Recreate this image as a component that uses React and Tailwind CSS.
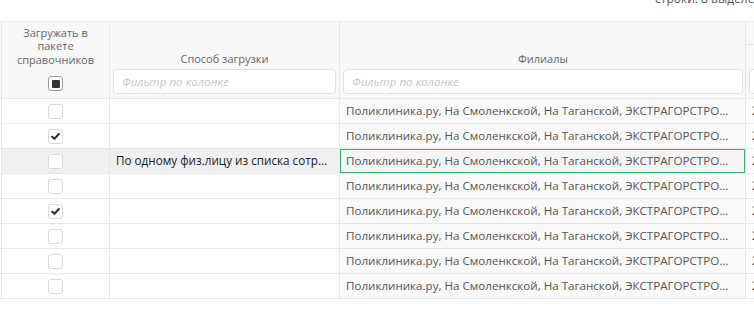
import React from "react";

const FILIAL = "Поликлиника.ру, На Смоленкской, На Таганской, ЭКСТРАГОРСТРО...";

const rows = [
  { checked: false },
  { checked: true },
  { checked: false, method: "По одному физ.лицу из списка сотр...", selected: true },
  { checked: false },
  { checked: true },
  { checked: false },
  { checked: false },
  { checked: false },
];

function Check({ checked }) {
  return (
    <div className="w-[15px] h-[15px] rounded-[3px] border border-[#d6d9de] bg-white flex items-center justify-center">
      {checked && (
        <svg width="9" height="7" viewBox="0 0 10 8">
          <path d="M1.2 4.2 L3.8 6.6 L8.8 1.2" fill="none" stroke="#333" strokeWidth="2.4" strokeLinecap="round" strokeLinejoin="round" />
        </svg>
      )}
    </div>
  );
}

function Filter() {
  return (
    <div className="h-[25px] w-full rounded-[4px] border border-[#dfe1e6] bg-white flex items-center pl-[8px] overflow-hidden">
      <span className="italic text-[11.6px] text-[#c2c6ce] whitespace-nowrap">Фильтр по колонке</span>
    </div>
  );
}

export default function App() {
  return (
    <div
      className="w-[754px] h-[322px] bg-white overflow-hidden text-[#555]"
      style={{ fontFamily: '"Open Sans", "Noto Sans", sans-serif' }}
    >
      <div className="h-[21px] overflow-hidden">
        <div className="ml-[655px] -mt-[9px] text-[12px] leading-[16px] whitespace-nowrap text-[#555]">
          строки: 8 выделено: 1
        </div>
      </div>

      <div className="border-t border-[#e8e9ec]">
        {/* header */}
        <div className="flex h-[77px] bg-[#f8f8f9] border-b border-[#e6e7ea]">
          <div className="w-[2px] shrink-0 border-r border-[#e6e7ea] flex flex-col">
            <div className="h-[23px] border-b border-[#e6e7ea]" />
          </div>
          <div className="w-[108px] shrink-0 border-r border-[#e6e7ea] flex flex-col items-center justify-end pb-[7px]">
            <div className="text-[11px] leading-[13.3px] text-center text-[#666] mb-[10px]">
              Загружать в<br />пакете<br />справочников
            </div>
            <div className="w-[15px] h-[15px] rounded-[3px] border border-[#9c9c9c] bg-white flex items-center justify-center">
              <div className="w-[8px] h-[8px] bg-[#333] rounded-[1px]" />
            </div>
          </div>
          <div className="w-[230px] shrink-0 border-r border-[#e6e7ea] flex flex-col justify-end px-[3px] pb-[4px]">
            <div className="text-[11px] leading-[13px] text-center text-[#666] mb-[4px]">Способ загрузки</div>
            <Filter />
          </div>
          <div className="w-[406px] shrink-0 border-r border-[#e6e7ea] flex flex-col justify-end pl-[3px] pr-[2px] pb-[4px]">
            <div className="text-[11px] leading-[13px] text-center text-[#666] mb-[4px]">Филиалы</div>
            <Filter />
          </div>
          <div className="w-[100px] shrink-0 flex flex-col">
            <div className="h-[23px] border-b border-[#e6e7ea]" />
            <div className="flex-1 flex flex-col justify-end pl-[3px] pb-[4px]">
              <Filter />
            </div>
          </div>
        </div>

        {/* body */}
        {rows.map((r, i) => (
          <div key={i} className="flex h-[25px] border-b border-[#e6e7ea]">
            <div className="w-[2px] shrink-0 border-r border-[#e6e7ea]" />
            <div
              className={`w-[108px] shrink-0 border-r border-[#e6e7ea] flex items-center justify-center ${
                r.selected ? "bg-[#eff0f2]" : "bg-white"
              }`}
            >
              <Check checked={r.checked} />
            </div>
            <div
              className={`w-[230px] shrink-0 border-r border-[#e6e7ea] flex items-center pl-[6px] overflow-hidden ${
                r.selected ? "bg-[#eff0f2]" : "bg-white"
              }`}
            >
              {r.method && (
                <span className="text-[11.7px] text-[#222] whitespace-nowrap">{r.method}</span>
              )}
            </div>
            <div
              className={`w-[406px] shrink-0 border-r border-[#e6e7ea] flex items-center pl-[6px] overflow-hidden ${
                r.selected ? "bg-[#f3f4f5] shadow-[inset_0_0_0_1px_#3fae69]" : "bg-[#f9f9f9]"
              }`}
            >
              <span className="text-[11.6px] text-[#555] whitespace-nowrap">{FILIAL}</span>
            </div>
            <div className="w-[100px] shrink-0 flex items-center pl-[6px] overflow-hidden bg-white">
              <span className="text-[12px] text-[#333] whitespace-nowrap">22.03.2021</span>
            </div>
          </div>
        ))}
      </div>
    </div>
  );
}
